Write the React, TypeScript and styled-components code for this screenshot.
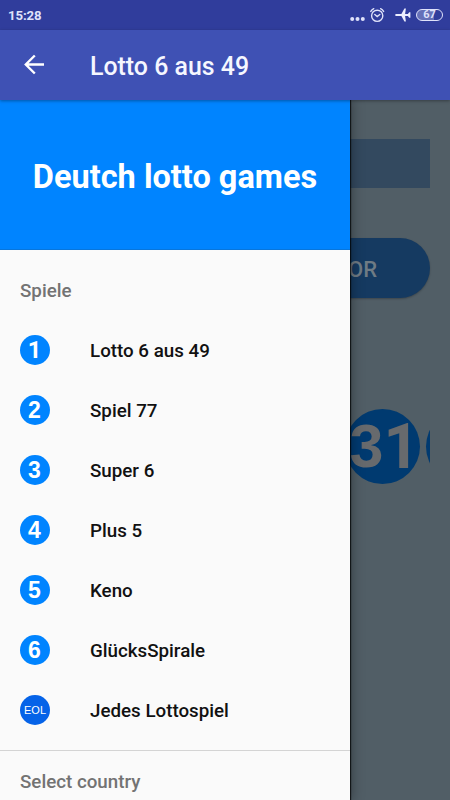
import React from "react";
import styled, { createGlobalStyle } from "styled-components";

const GlobalStyle = createGlobalStyle`
  * { box-sizing: border-box; }
  body { margin: 0; overflow: hidden; font-family: Roboto, "Liberation Sans", sans-serif; }
`;

const Screen = styled.div`
  width: 450px;
  height: 800px;
  overflow: hidden;
  display: flex;
  flex-direction: column;
  background: #515e66;
`;

const StatusBar = styled.header`
  flex: none;
  height: 30px;
  padding: 0 7px 0 8px;
  display: flex;
  align-items: center;
  justify-content: space-between;
  background: #303d9c;
  color: #dfe2fa;
`;

const Clock = styled.span`
  padding-top: 1px;
  font-size: 13.2px;
  line-height: 29px;
  font-weight: 700;
  letter-spacing: -0.1px;
`;

const StatusIcons = styled.div`
  display: flex;
  align-items: center;
  height: 30px;
  svg { display: block; }
`;

const AppBar = styled.div`
  flex: none;
  height: 70px;
  display: flex;
  align-items: center;
  padding-left: 24px;
  background: #3f51b4;
  color: #fff;
  position: relative;
  z-index: 2;
  box-shadow: 0 1px 3px rgba(0, 0, 0, 0.35);
`;

const BackButton = styled.button`
  width: 66px;
  padding: 0;
  border: 0;
  background: none;
  color: inherit;
  svg { display: block; }
`;

const Title = styled.h1`
  margin: 4px 0 0;
  font-size: 24.9px;
  line-height: 30px;
  font-weight: 500;
  color: #f5f7ff;
  white-space: nowrap;
`;

const Body = styled.div`
  flex: 1;
  min-height: 0;
  position: relative;
`;

const Content = styled.main`
  height: 700px;
  padding: 39px 20px 0;
  display: flex;
  flex-direction: column;
`;

const Field = styled.div`
  height: 49px;
  background: #33495f;
`;

const GenerateButton = styled.button`
  margin-top: 50px;
  height: 60px;
  border: 0;
  padding: 2px 53px 0 0;
  border-radius: 30px;
  background: #153a61;
  color: #6f7b84;
  font: 500 22px Roboto, sans-serif;
  text-align: right;
  box-shadow: 0 1px 2px rgba(0, 0, 0, 0.25);
`;

const Balls = styled.div`
  margin-top: 111px;
  height: 76px;
  padding-left: 325px;
  display: flex;
  gap: 6px;
  overflow: hidden;
`;

const Ball = styled.div`
  flex: none;
  width: 75px;
  height: 75px;
  border-radius: 50%;
  display: flex;
  align-items: center;
  justify-content: center;
  padding-left: 4px;
  background: #003a70;
  color: #676a6d;
  font: 700 61px/75px "Liberation Sans", sans-serif;
`;

const PlainOne = styled.span`
  font-family: Roboto, sans-serif;
  font-size: 1.03em;
`;

const Drawer = styled.nav`
  position: absolute;
  top: 0;
  left: 0;
  width: 350px;
  height: 700px;
  overflow: hidden;
  background: #fafafa;
  box-shadow: 0 0 1px 1px rgba(0, 0, 0, 0.7), 0 0 12px 1px rgba(0, 0, 0, 0.4);
`;

const Banner = styled.div`
  height: 150px;
  display: flex;
  align-items: center;
  justify-content: center;
  padding: 4px 0 0;
  background: #0084ff;
  border-bottom: 1px solid #0876dc;
  color: #fff;
  font-size: 32.5px;
  font-weight: 700;
  white-space: nowrap;
`;

const SectionLabel = styled.h2<{ $top: number; $height: number }>`
  margin: 0;
  height: ${(p) => p.$height}px;
  padding: ${(p) => p.$top}px 0 0 20px;
  line-height: 22px;
  font-size: 18.75px;
  font-weight: 500;
  color: #737373;
`;

const GameList = styled.ul`
  margin: 0;
  padding: 0 0 10px;
  list-style: none;
  border-bottom: 1px solid #d4d4d4;
`;

const GameRow = styled.li`
  height: 60px;
  padding-left: 20px;
  display: flex;
  align-items: center;
  gap: 40px;
`;

const Badge = styled.span<{ $small?: boolean }>`
  width: 30px;
  height: 30px;
  border-radius: 50%;
  display: flex;
  align-items: center;
  justify-content: center;
  padding-right: ${(p) => (p.$small ? 0 : 1)}px;
  color: #fff;
  background: ${(p) => (p.$small ? "#0563e8" : "#0084ff")};
  font: ${(p) => (p.$small ? "400 11px/30px" : "700 23px/30px")} "Liberation Sans", sans-serif;
`;

const GameName = styled.span`
  padding-top: 1px;
  font-size: 18.75px;
  font-weight: 500;
  color: #111;
`;

const games = [
  { badge: "1", name: "Lotto 6 aus 49" },
  { badge: "2", name: "Spiel 77" },
  { badge: "3", name: "Super 6" },
  { badge: "4", name: "Plus 5" },
  { badge: "5", name: "Keno" },
  { badge: "6", name: "GlücksSpirale" },
  { badge: "EOL", name: "Jedes Lottospiel" },
];

const DotsIcon = () => (
  <svg width="20" height="30" fill="#dfe2fa">
    <circle cx="2.2" cy="19" r="2" />
    <circle cx="7.5" cy="19" r="2" />
    <circle cx="12.8" cy="19" r="2" />
  </svg>
);

const AlarmIcon = () => (
  <svg width="25" height="30" fill="none" stroke="#dfe2fa" strokeWidth="1.4" strokeLinecap="round">
    <circle cx="7.2" cy="15.8" r="5.6" />
    <path d="M0.8 11.4a7 7 0 0 1 3-2.7M13.6 11.4a7 7 0 0 0-3-2.7M4.8 14.5l2.4 2 2.6-2" />
  </svg>
);

const PlaneIcon = () => (
  <svg width="21" height="30" fill="#eceefe">
    <path d="M0.2 15c0-.6.5-1 1.2-1h5l3-5.6h1.5l-.8 5.6h2.8l1.3-1.8h1.2V17.8h-1.2L12.9 16h-2.8l.8 5.6H9.4L6.4 16h-5C.7 16 .2 15.6.2 15Z" />
  </svg>
);

const Battery = styled.span`
  width: 27px;
  height: 12px;
  border: 1.5px solid #dfe2fa;
  border-radius: 6px;
  display: flex;
  align-items: center;
  justify-content: center;
  background: linear-gradient(90deg, #6671b8 67%, #303d9c 67%);
  font-size: 11px;
  line-height: 10px;
  font-weight: 700;
`;

const BackArrow = () => (
  <svg width="22" height="22" viewBox="0 0 22 22" fill="none" stroke="#fff" strokeWidth="2.4">
    <path d="M20 10.5H2.5M10.8 1.5L1.8 10.5l9 9" />
  </svg>
);

export default function App() {
  return (
    <>
      <GlobalStyle />
      <Screen>
        <StatusBar>
          <Clock>15:28</Clock>
          <StatusIcons>
            <DotsIcon />
            <AlarmIcon />
            <PlaneIcon />
            <Battery>67</Battery>
          </StatusIcons>
        </StatusBar>
        <AppBar>
          <BackButton aria-label="Back">
            <BackArrow />
          </BackButton>
          <Title>Lotto 6 aus 49</Title>
        </AppBar>
        <Body>
          <Content>
            <Field />
            <GenerateButton>OR</GenerateButton>
            <Balls>
              <Ball>
                3<PlainOne>1</PlainOne>
              </Ball>
              <Ball />
            </Balls>
          </Content>
          <Drawer>
            <Banner>Deutch lotto games</Banner>
            <SectionLabel $top={30} $height={70}>Spiele</SectionLabel>
            <GameList>
              {games.map(({ badge, name }) => (
                <GameRow key={name}>
                  <Badge $small={badge.length > 1}>
                    {badge === "1" ? <PlainOne>1</PlainOne> : badge}
                  </Badge>
                  <GameName>{name}</GameName>
                </GameRow>
              ))}
            </GameList>
            <SectionLabel $top={20} $height={49}>Select country</SectionLabel>
          </Drawer>
        </Body>
      </Screen>
    </>
  );
}
